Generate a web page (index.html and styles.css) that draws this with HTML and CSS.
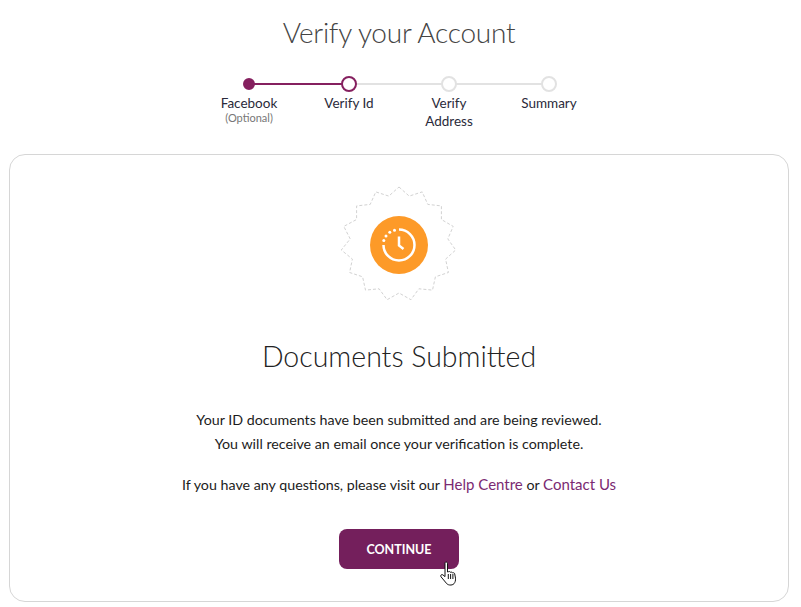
FILE: index.html

```html
<!DOCTYPE html>
<html lang="en">
<head>
  <meta charset="UTF-8">
  <title>Verify your Account</title>
  <link rel="stylesheet" href="styles.css">
</head>
<body>

<h1 class="page-title">Verify your Account</h1>

<ol class="steps">
  <li class="step done"><span class="dot"></span><span class="label">Facebook</span><small>(Optional)</small></li>
  <li class="step current"><span class="dot"></span><span class="label">Verify Id</span></li>
  <li class="step"><span class="dot"></span><span class="label">Verify<br>Address</span></li>
  <li class="step"><span class="dot"></span><span class="label">Summary</span></li>
</ol>

<section class="card">
  <div class="badge">
    <svg width="120" height="120" viewBox="0 0 120 120">
      <polygon class="seal" points="60,3 70.2,12.1 83.2,7.9 88.8,20.4 102.4,21.9 102.4,35.5 114.2,42.4 108.8,54.9 116.7,66 106.6,75.1 109.4,88.5 96.4,92.8 93.5,106.1 79.9,104.8 71.9,115.7 60,109 48.1,115.7 40.1,104.8 26.5,106.1 23.6,92.8 10.6,88.5 13.4,75.1 2.3,66 11.2,54.9 4.8,42.4 17.6,35.5 17.6,21.9 31.2,20.4 36.8,7.9 49.8,12.1"/>
      <circle cx="60" cy="61" r="29" class="seal-disc"/>
      <path class="clock" d="M60 45.500a15.500 15.500 0 1 1-15.500 15.500"/>
      <path class="clock" d="M60 52.500v9l4.500 3.500"/>
      <g class="clock-dots">
        <circle cx="55.500" cy="46.200" r="1.500"/>
        <circle cx="50.800" cy="48.300" r="1.500"/>
        <circle cx="47" cy="52" r="1.500"/>
        <circle cx="44.800" cy="56.500" r="1.500"/>
      </g>
    </svg>
  </div>
  <h2 class="card-title">Documents Submitted</h2>
  <p class="message">Your ID documents have been submitted and are being reviewed.<br>You will receive an email once your verification is complete.</p>
  <p class="help">If you have any questions, please visit our <a href="#">Help Centre</a> or <a href="#">Contact Us</a></p>
  <a class="continue" href="#">CONTINUE</a>
  <svg class="cursor" width="18" height="25" viewBox="0 0 18 25">
    <path d="M6 1c1 0 1.500.7 1.500 1.700V11l1-.3c.8-.4 1.700-.2 2 .6.800-.4 1.700-.2 2 .6.900-.4 1.900-.1 2.200.9l.8 4.400c.2 2.300-.4 4.200-1.500 5.500-1 1-2.500 1.500-4.300 1.300-1.600-.2-2.700-.8-3.500-2L1 15.800c-.9-1.200.4-2.800 1.800-2L5 15.600V2.700C5 1.700 5.300 1 6 1z" fill="#fff" stroke="#111" stroke-width="1"/>
    <path d="M8.300 13v5M10.600 13v5M12.900 13v5" stroke="#111" stroke-width="1"/>
  </svg>
</section>

</body>
</html>
```

FILE: styles.css

```css
* { box-sizing: border-box; }
html, body { margin: 0; }
body { width: 801px; height: 607px; overflow: hidden; padding: 0 12px 5px 9px; font-family: Lato, "Open Sans", sans-serif; color: #222; background: #fff; }

.page-title { margin: 0; padding-top: 14px; height: 69px; font-size: 28px; line-height: 36px; letter-spacing: -.25px; font-weight: 300; text-align: center; color: #444; }

.steps { list-style: none; margin: 0; padding: 0; height: 85px; display: flex; justify-content: center; }
.step { position: relative; width: 100px; display: flex; flex-direction: column; align-items: center; text-align: center; font-size: 13.500px; line-height: 18px; color: #2a2a3a; }
.step::before { content: ""; position: absolute; top: 14px; left: 50%; width: 100px; height: 2px; background: #e2e2e2; }
.step:last-child::before { display: none; }
.step.done::before { background: #85205f; }
.dot { position: relative; width: 16px; height: 16px; margin: 7px 0 2px; border: 2px solid #e2e2e2; border-radius: 50%; background: #fff; }
.done .dot { width: 12px; height: 12px; margin: 9px 0 4px; background: #85205f; border-color: #85205f; }
.current .dot { border-color: #85205f; }
.step small { font-size: 11px; line-height: 12px; color: #777; }

.card { position: relative; height: 448px; border: 1px solid #d6d6d6; border-radius: 16px; display: flex; flex-direction: column; align-items: center; text-align: center; }
.badge { height: 120px; margin-top: 29px; }
.seal { fill: #fff; stroke: #d2d2d2; stroke-width: 1; stroke-dasharray: 3 2; }
.seal-disc { fill: #fd9a28; }
.clock { fill: none; stroke: #fff; stroke-width: 2.500; }
.clock-dots { fill: #fff; }
.card-title { margin: 32px 0 0; height: 41px; font-size: 28.500px; line-height: 40px; font-weight: 300; color: #222; }
.message { margin: 31px 0 0; font-size: 14.250px; line-height: 24px; color: #1c1c1c; }
.help { margin: 16px 0 0; font-size: 14.250px; line-height: 24px; color: #1c1c1c; }
.help a { color: #7b2a72; text-decoration: none; font-size: 15px; }
.continue { margin-top: 32px; width: 120px; height: 40px; border-radius: 8px; background: #741f5c; color: #fff; font-size: 12.500px; font-weight: 700; line-height: 42px; text-decoration: none; }
.cursor { position: absolute; left: 430px; top: 406px; }
```
